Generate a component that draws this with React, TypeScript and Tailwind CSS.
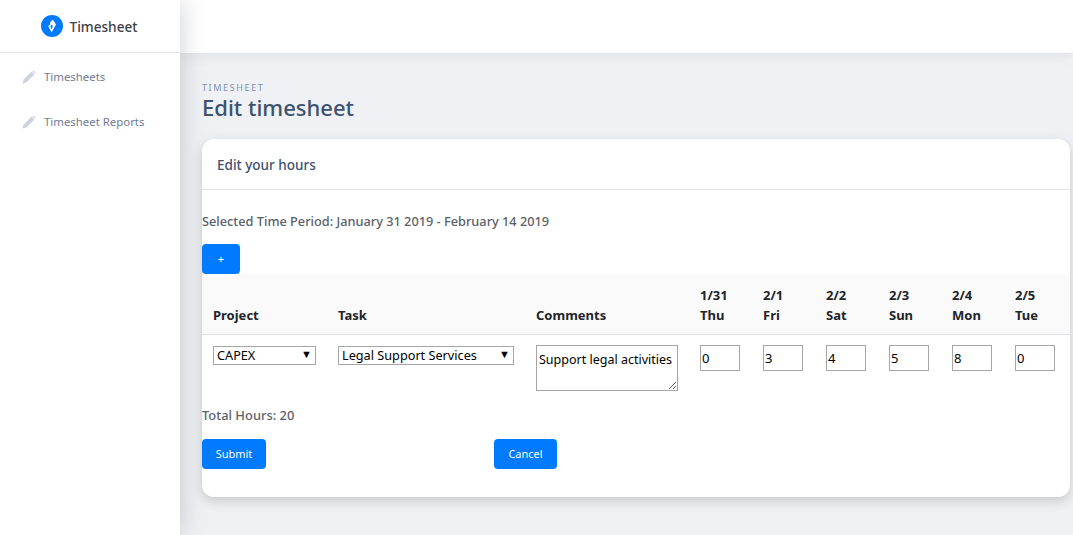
import React from "react";

const days = [
  ["1/31", "Thu", "0"],
  ["2/1", "Fri", "3"],
  ["2/2", "Sat", "4"],
  ["2/3", "Sun", "5"],
  ["2/4", "Mon", "8"],
  ["2/5", "Tue", "0"],
];

function Pencil() {
  return (
    <svg viewBox="0 0 14 14" className="w-[14px] h-[14px] shrink-0 -ml-[1px] mr-[1px]" fill="#cfd2de">
      <path d="M0.5 13.5 L1.6 9.6 L9.6 1.6 L12.4 4.4 L4.4 12.4 Z" />
      <path d="M10.4 0.9 Q11.2 0.2 12 0.9 L13.1 2 Q13.8 2.8 13.1 3.6 L12.9 3.8 L10.2 1.1 Z" />
    </svg>
  );
}

function Logo() {
  return (
    <svg viewBox="0 0 22 22" className="w-[22px] h-[22px] shrink-0">
      <circle cx="11" cy="11" r="11" fill="#007bff" />
      <path d="M11.8 4.4 L15 9.4 L10.6 17.6 L7.2 11 L9.2 9.4 L9 7.6 Z" fill="#fff" />
      <path d="M10.6 9.6 L11.8 11.2 L10.6 14.4 L9.4 11.2 Z" fill="#007bff" />
    </svg>
  );
}

export default function App() {
  return (
    <div className="flex h-[535px] w-[1073px] overflow-hidden bg-[#f0f1f4] font-['Noto_Sans','Open_Sans',sans-serif] text-[13px]">
      <aside className="relative z-20 w-[180px] shrink-0 bg-white shadow-[0_0_24px_rgba(90,97,105,0.3)]">
        <div className="flex h-[53px] items-center justify-center gap-[7px] border-b border-[#e1e5eb] pr-[2px]">
          <Logo />
          <span className="pt-[2px] text-[13.6px] font-medium text-[#3d4349]">Timesheet</span>
        </div>
        <nav className="flex flex-col gap-[25px] pt-[14px] pl-[23px]">
          <a className="flex h-[20px] items-center gap-[7px] text-[11.4px] text-[#6f7a94]">
            <Pencil />
            Timesheets
          </a>
          <a className="flex h-[20px] items-center gap-[7px] text-[11.4px] text-[#6f7a94]">
            <Pencil />
            Timesheet Reports
          </a>
        </nav>
      </aside>

      <div className="flex min-w-0 flex-1 flex-col">
        <header className="relative z-10 h-[53px] shrink-0 bg-white shadow-[0_2px_12px_rgba(90,97,105,0.12)]" />
        <main className="flex-1 pt-[30px] pr-[3px] pl-[22px]">
          <div className="text-[9px] leading-[10px] tracking-[0.18em] text-[#7f90ad]">TIMESHEET</div>
          <h1 className="text-[22px] leading-[28px] font-medium text-[#3d5170]">Edit timesheet</h1>

          <section className="mt-[18px] h-[358px] rounded-[12px] bg-white shadow-[0_4px_12px_rgba(90,97,105,0.28)]">
            <div className="flex h-[51px] items-center border-b border-[#e1e5eb] pt-[2px] pl-[15px] text-[13.5px] font-medium text-[#3d5170]">
              Edit your hours
            </div>
            <p className="mt-[22px] text-[12.75px] leading-[18px] font-medium text-[#5a6169]">
              Selected Time Period: January 31 2019 - February 14 2019
            </p>
            <button className="mt-[14px] block h-[30px] w-[38px] rounded-[4px] bg-[#007bff] text-[11px] text-white">+</button>

            <table className="w-[868px] table-fixed border-collapse text-[#212529]">
              <colgroup>
                <col className="w-[136px]" />
                <col className="w-[198px]" />
                <col className="w-[164px]" />
                <col className="w-[63px]" />
                <col className="w-[63px]" />
                <col className="w-[63px]" />
                <col className="w-[63px]" />
                <col className="w-[63px]" />
                <col className="w-[55px]" />
              </colgroup>
              <thead>
                <tr className="h-[60px] border-b border-[#dee2e6] bg-[#fafafa] text-left align-bottom text-[13px] leading-[20px] font-bold">
                  <th className="pb-[9px] pl-[11px] font-bold">Project</th>
                  <th className="pb-[9px] font-bold">Task</th>
                  <th className="pb-[9px] font-bold">Comments</th>
                  {days.map(([d, w]) => (
                    <th key={d} className="pb-[9px] font-bold">
                      {d}
                      <br />
                      {w}
                    </th>
                  ))}
                </tr>
              </thead>
              <tbody>
                <tr className="align-top text-[12.7px]">
                  <td className="pt-[11px] pl-[11px]">
                    <div className="flex h-[19px] w-[103px] items-center justify-between border border-[#a6a6a6] bg-white pr-[3px] pl-[3px] text-black">
                      <span className="pt-[2px]">CAPEX</span>
                      <span className="-mt-[3px] text-[11px] leading-none">▼</span>
                    </div>
                  </td>
                  <td className="pt-[11px]">
                    <div className="flex h-[19px] w-[176px] items-center justify-between border border-[#a6a6a6] bg-white pr-[3px] pl-[3px] text-black">
                      <span className="pt-[2px]">Legal Support Services</span>
                      <span className="-mt-[3px] text-[11px] leading-none">▼</span>
                    </div>
                  </td>
                  <td className="pt-[10px]">
                    <textarea
                      readOnly
                      wrap="off"
                      defaultValue="Support legal activities"
                      className="block h-[46px] w-[142px] overflow-hidden border border-[#a6a6a6] px-[2px] pt-[5px] pb-[1px] text-[12.5px] leading-[18px] text-black outline-none"
                    />
                  </td>
                  {days.map(([d, , v]) => (
                    <td key={d} className="pt-[10px]">
                      <input
                        readOnly
                        value={v}
                        className="block h-[26px] w-[40px] border border-[#a6a6a6] px-[1px] text-[13px] text-black outline-none"
                      />
                    </td>
                  ))}
                </tr>
              </tbody>
            </table>

            <p className="mt-[15px] text-[12.9px] leading-[18px] font-medium text-[#5a6169]">Total Hours: 20</p>
            <div className="mt-[15px] flex">
              <button className="h-[30px] w-[64px] rounded-[4px] bg-[#007bff] pt-[1px] text-[11px] text-white">Submit</button>
              <button className="ml-[228px] h-[30px] w-[63px] rounded-[4px] bg-[#007bff] pt-[1px] text-[11px] text-white">Cancel</button>
            </div>
          </section>
        </main>
      </div>
    </div>
  );
}
